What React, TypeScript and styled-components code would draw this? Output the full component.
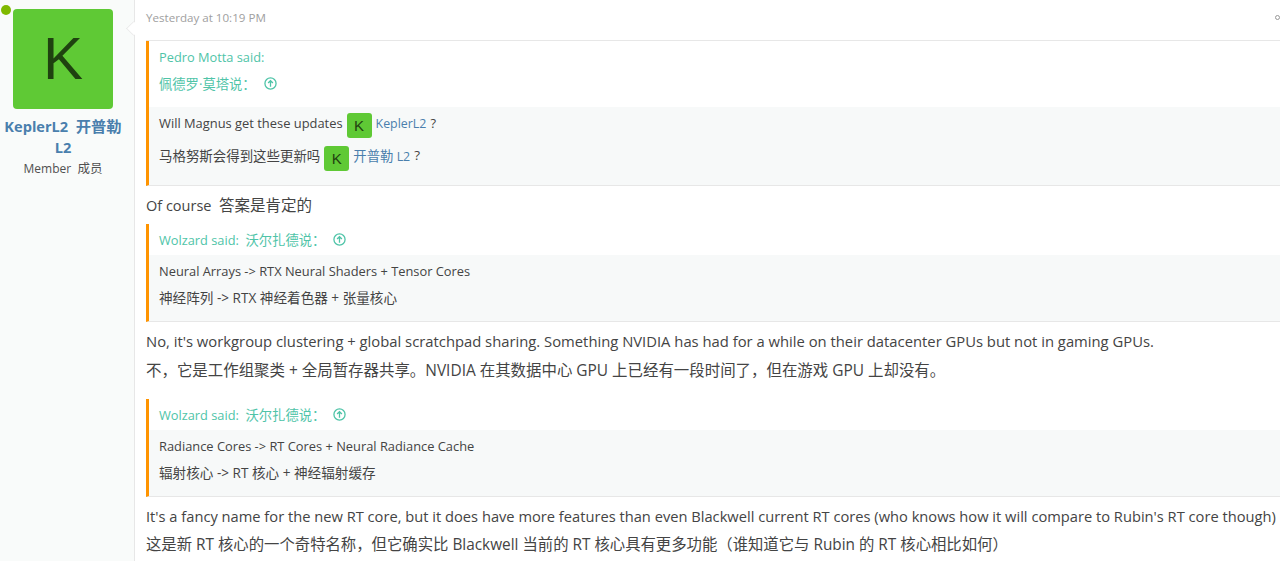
import React from "react";
import styled, {createGlobalStyle} from "styled-components";

const GlobalStyle = createGlobalStyle`
	html, body {
		margin: 0;
		padding: 0;
		height: 100%;
		overflow: hidden;
		background: #fff;
	}
	body {
		font-family: "Open Sans", "Noto Sans CJK SC", sans-serif;
		font-size: 14px;
		color: #333;
	}
`;

const Message = styled.div`
	display: flex;
	width: 1280px;
	height: 561px;
	overflow: hidden;
`;

const UserCell = styled.aside`
	position: relative;
	flex: none;
	box-sizing: border-box;
	width: 135px;
	padding: 9px 12px 0 4px;
	background: #f9fbfa;
	border-right: 1px solid #e7e7e7;
	text-align: center;
`;

const Arrow = styled.span`
	position: absolute;
	top: 22px;
	right: -6px;
	width: 12px;
	height: 12px;
	background: #fff;
	border-left: 1px solid #e7e7e7;
	border-bottom: 1px solid #e7e7e7;
	transform: rotate(45deg) scale(0.8);
`;

const OnlineDot = styled.span`
	position: absolute;
	top: 5px;
	left: 1px;
	width: 10px;
	height: 10px;
	border-radius: 50%;
	background: #7fb900;
`;

const Avatar = styled.div<{$size: number}>`
	display: inline-flex;
	flex: none;
	align-items: center;
	justify-content: center;
	width: ${p => p.$size}px;
	height: ${p => p.$size}px;
	border-radius: ${p => (p.$size > 50 ? 4 : 3)}px;
	background: #5fc935;
	color: #1f4210;
	font-family: "Liberation Sans", sans-serif;
	font-size: ${p => Math.round(p.$size * 0.6)}px;
	line-height: 1;
`;

const InlineAvatar = styled(Avatar)<{$drop: number}>`
	margin-top: ${p => p.$drop}px;
`;

const UserName = styled.div`
	margin: 7px -4px 0;
	color: #4a7fad;
	font-size: 14.6px;
	font-weight: 700;
	line-height: 21px;
`;

const UserTitle = styled.div`
	margin-top: 3px;
	font-size: 12px;
	line-height: 16px;
	color: #505050;
`;

const Main = styled.main`
	flex: 1;
	min-width: 0;
	padding: 0 0 0 11px;
`;

const Attribution = styled.header`
	display: flex;
	align-items: center;
	justify-content: space-between;
	height: 41px;
	box-sizing: border-box;
	padding-bottom: 5px;
	border-bottom: 1px solid #e7e7e7;
	font-size: 11.6px;
	color: #a0a0a0;
`;

const Ring = styled.span`
	width: 3px;
	height: 3px;
	border: 1px solid #999;
	border-radius: 50%;
`;

const Quote = styled.section<{$top?: number}>`
	margin-top: ${p => p.$top || 0}px;
	border-left: 3px solid #ff9400;
	border-bottom: 1px solid #e7e7e7;
`;

const QuoteTitle = styled.div<{$bottom: number}>`
	padding: 2px 0 ${p => p.$bottom}px 10px;
	color: #4fc4a8;
	font-size: 12.8px;
`;

const TitleLine = styled.div`
	display: flex;
	align-items: center;
	height: 27px;
	gap: 8px;
`;

const QuoteBody = styled.div<{$top: number; $bottom: number}>`
	padding: ${p => p.$top}px 0 ${p => p.$bottom}px 10px;
	background: #f7f9f9;
	font-size: 12.85px;
`;

const QuoteLine = styled.div<{$cjk?: boolean}>`
	display: flex;
	box-sizing: border-box;
	align-items: center;
	height: 27px;
	padding-bottom: ${p => (p.$cjk ? 2 : 0)}px;
	white-space: nowrap;
	color: #444;
	font-size: ${p => (p.$cjk ? "13.6px" : "inherit")};
`;

const MentionLine = styled(QuoteLine)`
	height: 33px;
	padding-bottom: ${p => (p.$cjk ? 4 : 2)}px;
	gap: 4px;
	font-size: ${p => (p.$cjk ? "13.45px" : "12.9px")};
`;

const Mention = styled.a`
	margin-top: 1px;
	color: #4a7fad;
	font-size: 12.4px;
`;

const Paragraph = styled.p<{$top?: number; $size: number; $cjk?: boolean}>`
	margin: ${p => p.$top || 0}px 0 0;
	height: 30px;
	line-height: ${p => (p.$cjk ? 28 : 30)}px;
	font-size: ${p => p.$size}px;
	white-space: nowrap;
	color: #444;
`;

const Cjk = styled.span<{$size: number}>`
	font-size: ${p => p.$size}px;
`;

const UpIcon = () => (
	<svg width="13" height="13" viewBox="0 0 14 14" fill="none" stroke="#4fc4a8" strokeWidth="1.4">
		<circle cx="7" cy="7" r="6" />
		<path d="M7 10.5V4M4.4 6.5 7 4l2.6 2.5" />
	</svg>
);

export default function App() {
	return (
		<>
			<GlobalStyle />
			<Message>
				<UserCell>
					<OnlineDot />
					<Avatar $size={100}>K</Avatar>
					<UserName>
						KeplerL2&nbsp; <Cjk $size={15.3}>开普勒</Cjk> L2
					</UserName>
					<UserTitle>
						Member&nbsp; <Cjk $size={12.5}>成员</Cjk>
					</UserTitle>
					<Arrow />
				</UserCell>
				<Main>
					<Attribution>
						<span>Yesterday at 10:19 PM</span>
						<Ring />
					</Attribution>
					<Quote>
						<QuoteTitle $bottom={10}>
							<TitleLine>Pedro Motta said:</TitleLine>
							<TitleLine>
								<Cjk $size={13.3}>佩德罗·莫塔说：</Cjk> <UpIcon />
							</TitleLine>
						</QuoteTitle>
						<QuoteBody $top={0} $bottom={12}>
							<MentionLine>
								Will Magnus get these updates <InlineAvatar $size={25} $drop={5}>K</InlineAvatar>
								<Mention>KeplerL2</Mention> ?
							</MentionLine>
							<MentionLine $cjk>
								马格努斯会得到这些更新吗 <InlineAvatar $size={25} $drop={7}>K</InlineAvatar>
								<Mention>
									<Cjk $size={13.4}>开普勒</Cjk> L2
								</Mention>{" "}
								?
							</MentionLine>
						</QuoteBody>
					</Quote>
					<Paragraph $top={4} $size={14.5}>
						Of course&nbsp; <Cjk $size={15.5}>答案是肯定的</Cjk>
					</Paragraph>
					<Quote $top={4}>
						<QuoteTitle $bottom={2}>
							<TitleLine>
								<span>
									Wolzard said:&nbsp; <Cjk $size={13.3}>沃尔扎德说：</Cjk>
								</span>{" "}
								<UpIcon />
							</TitleLine>
						</QuoteTitle>
						<QuoteBody $top={2} $bottom={10}>
							<QuoteLine>Neural Arrays -&gt; RTX Neural Shaders + Tensor Cores</QuoteLine>
							<QuoteLine $cjk>神经阵列 -&gt; RTX 神经着色器 + 张量核心</QuoteLine>
						</QuoteBody>
					</Quote>
					<Paragraph $top={4} $size={14.8}>
						No, it's workgroup clustering + global scratchpad sharing. Something NVIDIA has had for a while on their datacenter GPUs but not in gaming GPUs.
					</Paragraph>
					<Paragraph $cjk $size={15.45}>不，它是工作组聚类 + 全局暂存器共享。NVIDIA 在其数据中心 GPU 上已经有一段时间了，但在游戏 GPU 上却没有。</Paragraph>
					<Quote $top={13}>
						<QuoteTitle $bottom={2}>
							<TitleLine>
								<span>
									Wolzard said:&nbsp; <Cjk $size={13.3}>沃尔扎德说：</Cjk>
								</span>{" "}
								<UpIcon />
							</TitleLine>
						</QuoteTitle>
						<QuoteBody $top={2} $bottom={10}>
							<QuoteLine>Radiance Cores -&gt; RT Cores + Neural Radiance Cache</QuoteLine>
							<QuoteLine $cjk>辐射核心 -&gt; RT 核心 + 神经辐射缓存</QuoteLine>
						</QuoteBody>
					</Quote>
					<Paragraph $top={4} $size={14.68}>
						It's a fancy name for the new RT core, but it does have more features than even Blackwell current RT cores (who knows how it will compare to Rubin's RT core though)
					</Paragraph>
					<Paragraph $cjk $size={15.36}>这是新 RT 核心的一个奇特名称，但它确实比 Blackwell 当前的 RT 核心具有更多功能（谁知道它与 Rubin 的 RT 核心相比如何）</Paragraph>
				</Main>
			</Message>
		</>
	);
}
